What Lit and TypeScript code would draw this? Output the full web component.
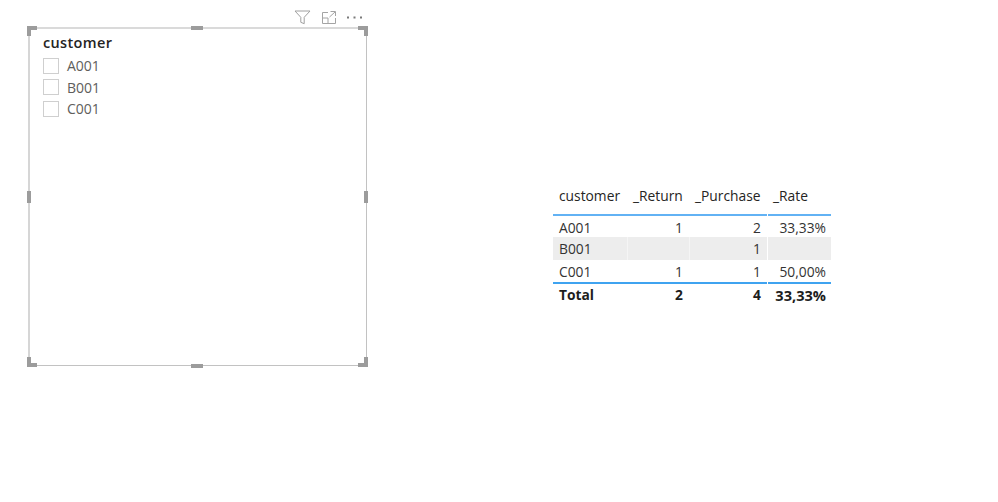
import { LitElement, html, css, svg } from "lit";
import { customElement } from "lit/decorators.js";

const ROWS = [
  ["A001", "1", "2", "33,33%"],
  ["B001", "", "1", ""],
  ["C001", "1", "1", "50,00%"],
];

@customElement("app-root")
export class AppRoot extends LitElement {
  static styles = css`
    :host {
      display: block;
      width: 998px;
      height: 502px;
      background: #fff;
      font-family: "Open Sans", "Noto Sans", sans-serif;
      color: #333;
      overflow: hidden;
    }
    .page {
      display: flex;
      align-items: flex-start;
      padding: 8px 0 0 28px;
    }
    .visual {
      width: 339px;
      flex: none;
    }
    .toolbar {
      display: flex;
      justify-content: flex-end;
      align-items: center;
      gap: 11px;
      height: 19px;
      padding-right: 5px;
      box-sizing: border-box;
    }
    .toolbar svg {
      display: block;
    }
    .slicer {
      position: relative;
      height: 339px;
      box-sizing: border-box;
      border-style: solid;
      border-width: 2px 1px 1px 2px;
      border-color: #dadada #c2c2c2 #c2c2c2 #d6d6d6;
      padding: 5px 13px;
    }
    .handle {
      position: absolute;
      background: #9c9c9c;
    }
    .h-top { top: -3px; left: 161px; width: 12px; height: 4px; }
    .h-bottom { bottom: -3px; left: 161px; width: 12px; height: 4px; }
    .h-left { left: -3px; top: 162px; width: 4px; height: 12px; }
    .h-right { right: -2px; top: 162px; width: 4px; height: 12px; }
    .corner {
      position: absolute;
      width: 6px;
      height: 6px;
      border: 0 solid #9c9c9c;
    }
    .c-tl { left: -3px; top: -3px; border-left-width: 4px; border-top-width: 4px; }
    .c-tr { right: -2px; top: -3px; border-right-width: 4px; border-top-width: 4px; }
    .c-bl { left: -3px; bottom: -2px; border-left-width: 4px; border-bottom-width: 4px; }
    .c-br { right: -2px; bottom: -2px; border-right-width: 4px; border-bottom-width: 4px; }
    .title {
      font-size: 14.5px;
      line-height: 18px;
      letter-spacing: 0.35px;
      color: #252423;
      font-weight: 600;
      margin-bottom: 3px;
    }
    .opt {
      display: flex;
      align-items: center;
      gap: 8px;
      height: 21.5px;
      font-size: 14px;
      color: #605e5c;
    }
    .box {
      width: 14px;
      height: 14px;
      border: 1px solid #cfcfcf;
      flex: none;
    }
    .table {
      margin: 177px 0 0 186px;
      display: grid;
      grid-template-columns: 75px 62px 78px 63px;
      grid-template-rows: 31px 21px 23px 22px 24px;
      font-size: 13.8px;
      color: #333;
    }
    .cell {
      line-height: 22px;
      padding: 1px 6px 0 5px;
      box-sizing: border-box;
      text-align: right;
      white-space: nowrap;
    }
    .cell:nth-child(4n + 1) { padding-left: 6px; padding-right: 7px; text-align: left; }
    .cell:nth-child(4n + 2) { padding-right: 7px; }
    .cell:nth-child(4n + 3) { margin-right: 1px; }
    .cell:nth-child(4n) { padding-right: 5px; }
    .head {
      padding-top: 0;
      color: #252423;
      text-align: left;
      border-bottom: 2px solid #62b2f4;
    }
    .alt { background: #ededed; }
    .alt:nth-child(4n + 1), .alt:nth-child(4n + 2) { border-right: 1px solid #f5f5f5; padding-right: 6px; }
    .total {
      padding-top: 0;
      font-weight: 700;
      color: #1d1d1d;
      border-top: 2px solid #3fa3f0;
    }
    .wide { font-size: 14.6px; }
  `;

  private icons() {
    return html`
      <svg width="17" height="15" viewBox="0 0 17 15" fill="none" stroke="#a0a0a0" stroke-width="1">
        ${svg`<path d="M1 1h15l-5.8 6.3v6.4l-3.4-1.4v-5z"/>`}
      </svg>
      <svg width="14" height="13" viewBox="0 0 14 13" fill="none" stroke="#a4a4a4" stroke-width="1">
        ${svg`<path d="M6 1.5H.5v11h13V7M.5 7H6v5.5M7.5 6l5.5-5M8.5.5h5V5"/>`}
      </svg>
      <svg width="15" height="3" viewBox="0 0 15 3" fill="#7a7a7a">
        ${svg`<rect x="0" y="0.5" width="2" height="2"/><rect x="6.5" y="0.5" width="2" height="2"/><rect x="13" y="0.5" width="2" height="2"/>`}
      </svg>
    `;
  }

  render() {
    return html`
      <div class="page">
        <div class="visual">
          <div class="toolbar">${this.icons()}</div>
          <div class="slicer">
            <span class="handle h-top"></span><span class="handle h-bottom"></span>
            <span class="handle h-left"></span><span class="handle h-right"></span>
            <span class="corner c-tl"></span><span class="corner c-tr"></span>
            <span class="corner c-bl"></span><span class="corner c-br"></span>
            <div class="title">customer</div>
            ${["A001", "B001", "C001"].map(
              (o) => html`<div class="opt"><span class="box"></span><span>${o}</span></div>`
            )}
          </div>
        </div>
        <div class="table">
          <div class="cell head">customer</div>
          <div class="cell head">_Return</div>
          <div class="cell head">_Purchase</div>
          <div class="cell head">_Rate</div>
          ${ROWS.map((r, i) =>
            r.map((c) => html`<div class="cell ${i === 1 ? "alt" : ""}">${c}</div>`)
          )}
          <div class="cell total">Total</div>
          <div class="cell total">2</div>
          <div class="cell total">4</div>
          <div class="cell total wide">33,33%</div>
        </div>
      </div>
    `;
  }
}
